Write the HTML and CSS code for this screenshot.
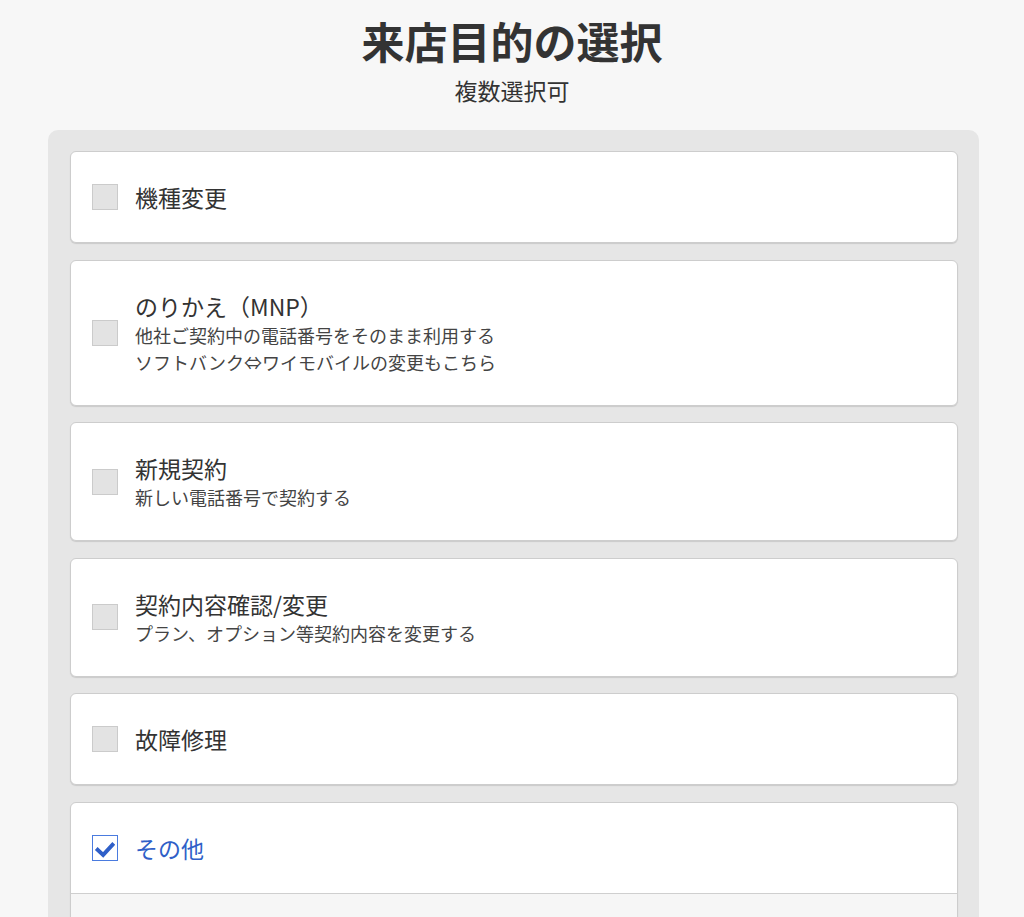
FILE: index.html
```html
<!DOCTYPE html>
<html lang="ja">
<head>
<meta charset="utf-8">
<title>来店目的の選択</title>
<link rel="stylesheet" href="styles.css">
</head>
<body>
<header class="head">
  <h1 class="title">来店目的の選択</h1>
  <p class="subtitle">複数選択可</p>
</header>
<main class="panel">
  <div class="card">
    <div class="row">
      <span class="box"></span>
      <div class="text"><div class="label">機種変更</div></div>
    </div>
  </div>
  <div class="card">
    <div class="row">
      <span class="box"></span>
      <div class="text">
        <div class="label">のりかえ（MNP）</div>
        <div class="sub">他社ご契約中の電話番号をそのまま利用する</div>
        <div class="sub">ソフトバンク⇔ワイモバイルの変更もこちら</div>
      </div>
    </div>
  </div>
  <div class="card">
    <div class="row">
      <span class="box"></span>
      <div class="text">
        <div class="label">新規契約</div>
        <div class="sub">新しい電話番号で契約する</div>
      </div>
    </div>
  </div>
  <div class="card">
    <div class="row">
      <span class="box"></span>
      <div class="text">
        <div class="label">契約内容確認/変更</div>
        <div class="sub">プラン、オプション等契約内容を変更する</div>
      </div>
    </div>
  </div>
  <div class="card">
    <div class="row">
      <span class="box"></span>
      <div class="text"><div class="label">故障修理</div></div>
    </div>
  </div>
  <div class="card">
    <div class="row checked">
      <span class="box">
        <svg viewBox="0 0 26 26" width="24" height="24"><path d="M3.5 13.5 L11 20.5 L22.5 8" fill="none" stroke="#2f5fc8" stroke-width="4.2"/></svg>
      </span>
      <div class="text"><div class="label">その他</div></div>
    </div>
    <div class="extra"></div>
  </div>
</main>
</body>
</html>
```
FILE: styles.css
```css
html, body {
  margin: 0;
  padding: 0;
}
body {
  background: #f7f7f7;
  font-family: "Noto Sans CJK JP", "Noto Sans", sans-serif;
  color: #333;
}
.head {
  text-align: center;
  padding-top: 14px;
}
.title {
  margin: 0;
  font-size: 43px;
  line-height: 52px;
  font-weight: 700;
  color: #333;
}
.subtitle {
  margin: 9px 0 0;
  font-size: 23px;
  line-height: 30px;
  color: #333;
}
.panel {
  margin: 25px 45px 0 48px;
  background: #e6e6e6;
  border-radius: 10px 10px 0 0;
  padding: 21px 21px 0 22px;
  display: flex;
  flex-direction: column;
  gap: 16.6px;
}
.card {
  background: #fff;
  border: 1px solid #cdcdcd;
  border-radius: 6px;
  box-shadow: 0 1px 1px rgba(0, 0, 0, 0.12);
  overflow: hidden;
}
.row {
  display: flex;
  align-items: center;
  padding: 29px 21px;
}
.box {
  flex: none;
  width: 24px;
  height: 24px;
  border: 1px solid #cbcbcb;
  background: #e3e3e3;
  margin-right: 17px;
  display: flex;
}
.checked .box {
  background: #fff;
  border-color: #4a7bdf;
}
.label {
  font-size: 23px;
  line-height: 32px;
  color: #333;
}
.checked .label {
  color: #2f5fc8;
}
.sub {
  font-size: 18px;
  line-height: 27px;
  color: #444;
}
.extra {
  height: 40px;
  background: #f6f6f6;
  border-top: 1px solid #cfcfcf;
}
```
